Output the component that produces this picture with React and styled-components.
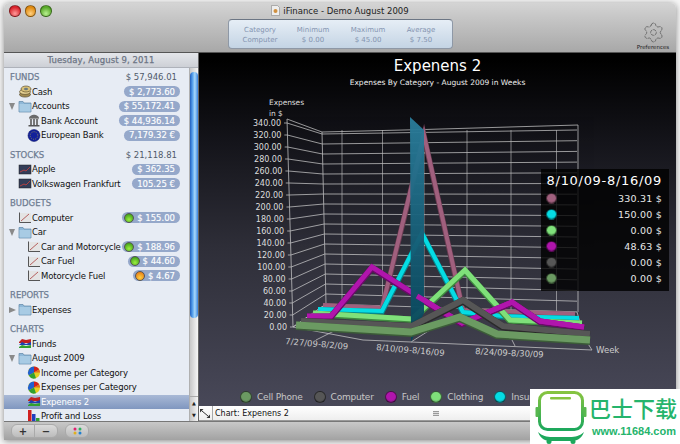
import React from 'react';
import styled, { createGlobalStyle } from 'styled-components';
import { Settings } from 'lucide-react';

const UI_FONT = '"DejaVu Sans", Verdana, sans-serif';

const GlobalStyle = createGlobalStyle`
  html, body {
    margin: 0;
    padding: 0;
    background: #f6f6f6;
    font-family: ${UI_FONT};
  }
`;

const Page = styled.div`
  position: relative;
  width: 680px;
  height: 444px;
  padding: 3px 4px 4px;
  box-sizing: border-box;
  overflow: hidden;
`;

const Window = styled.div`
  display: flex;
  flex-direction: column;
  height: 437px;
  border-radius: 5px 5px 0 0;
  overflow: hidden;
  box-shadow: 0 1px 6px rgba(0, 0, 0, 0.45);
`;

/* ---- toolbar ---- */
const TitleBar = styled.div`
  position: relative;
  height: 50px;
  flex: none;
  background: linear-gradient(#d4d4d4, #c6c6c6 30%, #a8a8a8);
  border-bottom: 1px solid #555;
  box-sizing: border-box;
`;

const Lights = styled.div`
  position: absolute;
  left: 5px;
  top: 2px;
  display: flex;
  gap: 4px;
`;

const Light = styled.span`
  width: 9.5px;
  height: 9.5px;
  border-radius: 50%;
  background: radial-gradient(circle at 50% 75%, ${(p) => p.$hi}, ${(p) => p.$lo} 70%);
  border: 0.5px solid rgba(0, 0, 0, 0.4);
`;

const WindowTitle = styled.div`
  display: flex;
  justify-content: center;
  align-items: center;
  gap: 3px;
  height: 15px;
  font-size: 8.5px;
  color: #222;
`;

const InfoPanel = styled.div`
  position: absolute;
  left: 224px;
  top: 16px;
  width: 225px;
  height: 30px;
  box-sizing: border-box;
  display: grid;
  grid-template-columns: 62px 44px 66px 40px;
  padding-top: 5px;
  border: 1px solid #8e98a6;
  border-top-color: #6c7684;
  border-radius: 4px;
  background: linear-gradient(#e6eef6, #c4d4e4);
`;

const InfoCell = styled.div`
  text-align: center;
  font-size: 7px;
  line-height: 10px;
  color: #8494b0;
  white-space: nowrap;
`;

const PrefButton = styled.div`
  position: absolute;
  right: 2px;
  top: 18px;
  width: 42px;
  display: flex;
  flex-direction: column;
  align-items: center;
  font-size: 5.5px;
  color: #222;
  line-height: 7px;
`;

/* ---- main ---- */
const Main = styled.div`
  display: flex;
  height: 368px;
  flex: none;
`;

const Sidebar = styled.div`
  width: 195px;
  flex: none;
  display: flex;
  flex-direction: column;
  background: #e7ecf4;
  border-right: 1px solid #666;
  box-sizing: border-box;
`;

const DateBar = styled.div`
  height: 15px;
  flex: none;
  text-align: center;
  font-size: 8.5px;
  line-height: 15px;
  color: #6c7484;
  -webkit-text-stroke: 0.25px #6c7484;
  letter-spacing: 0.1px;
  background: linear-gradient(#e4e6ea, #cdd0d6);
  border-bottom: 1px solid #aeb2ba;
  box-sizing: border-box;
`;

const SideBody = styled.div`
  flex: 1;
  display: flex;
  min-height: 0;
`;

const List = styled.div`
  flex: 1;
  min-width: 0;
  padding-top: 2px;
  overflow: hidden;
`;

const Section = styled.div`
  margin-bottom: 5px;
`;

const SectionHead = styled.div`
  display: flex;
  justify-content: space-between;
  align-items: center;
  height: 14.5px;
  padding: 0 12px 0 6px;
  font-size: 8.5px;
  color: #6e7c92;
  -webkit-text-stroke: 0.25px #6e7c92;
`;

const SectionTotal = styled.span`
  font-size: 8.5px;
  color: #505a6a;
  -webkit-text-stroke: 0;
`;

const Row = styled.div`
  display: flex;
  align-items: center;
  height: 14.5px;
  padding: 0 9px 0 ${(p) => (p.$level === 2 ? 23 : 14)}px;
  position: relative;
  font-size: 8.5px;
  color: ${(p) => (p.$selected ? '#fff' : '#111')};
  background: ${(p) => (p.$selected ? 'linear-gradient(#a9b9d6, #7f96bf)' : 'none')};
  white-space: nowrap;
`;

const RowLabel = styled.span`
  flex: 1;
  letter-spacing: -0.15px;
`;

const Disclosure = styled.span`
  position: absolute;
  left: 5px;
  top: 4px;
  width: 0;
  height: 0;
  ${(p) =>
    p.$open
      ? 'border-left: 3.5px solid transparent; border-right: 3.5px solid transparent; border-top: 7px solid #8a8a8a;'
      : 'border-top: 3.5px solid transparent; border-bottom: 3.5px solid transparent; border-left: 7px solid #8a8a8a;'}
`;

const Pill = styled.span`
  display: flex;
  align-items: center;
  gap: 3px;
  height: 11px;
  padding: 0 5px;
  border-radius: 6px;
  background: #95a8ca;
  color: #fff;
  font-size: 8.5px;
  -webkit-text-stroke: 0.15px #fff;
`;

const Led = styled.span`
  width: 8px;
  height: 8px;
  margin-left: -3px;
  border-radius: 50%;
  border: 0.5px solid #555;
  background: radial-gradient(circle at 50% 70%, ${(p) => p.$hi}, ${(p) => p.$lo});
`;

const ScrollBar = styled.div`
  width: 9px;
  flex: none;
  display: flex;
  flex-direction: column;
  background: linear-gradient(90deg, #c8c8c8, #f6f6f6);
  border-left: 1px solid #b0b0b0;
  box-sizing: border-box;
`;

const ScrollThumb = styled.div`
  height: 246px;
  margin: 4px 0 0 0;
  border-radius: 5px;
  background: linear-gradient(90deg, #1f5fc0, #5ea8f0 35%, #a8d8fa 60%, #3a84e0);
`;

const ScrollArrows = styled.div`
  margin-top: auto;
  height: 24px;
  display: flex;
  flex-direction: column;
  align-items: center;
  justify-content: space-around;
  font-size: 5px;
  line-height: 6px;
  color: #222;
  border-top: 1px solid #aaa;
`;

/* ---- chart ---- */
const RightColumn = styled.div`
  flex: 1;
  min-width: 0;
  display: flex;
  flex-direction: column;
`;

const ChartPane = styled.div`
  flex: 1;
  display: flex;
  flex-direction: column;
  min-height: 0;
  background: linear-gradient(#000 2%, #14141a 25%, #2e2e38 55%, #484858);
`;

const ChartHead = styled.div`
  height: 39px;
  flex: none;
  text-align: center;
  color: #fff;
`;

const ChartTitle = styled.div`
  padding-top: 3px;
  font-size: 15px;
  line-height: 21px;
`;

const ChartSub = styled.div`
  font-size: 7.5px;
  line-height: 12px;
  color: #eee;
`;

const Plot = styled.div`
  position: relative;
  height: 296px;
  flex: none;
`;

const PlotSvg = styled.svg`
  display: block;
  width: 100%;
  height: 100%;
`;

const Tip = styled.div`
  position: absolute;
  left: 342px;
  top: 77px;
  width: 128px;
  height: 122px;
  padding: 3px 7px 0 5px;
  box-sizing: border-box;
  background: rgba(0, 0, 0, 0.8);
  color: #e8e8e8;
`;

const TipTitle = styled.div`
  font-size: 13px;
  letter-spacing: 0.7px;
  line-height: 18px;
  color: #fff;
  text-align: right;
  white-space: nowrap;
`;

const TipRow = styled.div`
  display: flex;
  justify-content: space-between;
  align-items: center;
  height: 16px;
  font-size: 9.5px;
  letter-spacing: 0.2px;
`;

const Ball = styled.span`
  width: ${(p) => p.$size}px;
  height: ${(p) => p.$size}px;
  flex: none;
  border-radius: 50%;
  background: radial-gradient(circle at 50% 35%, ${(p) => p.$color} 55%, rgba(0, 0, 0, 0.55) 130%);
  border: 0.5px solid rgba(0, 0, 0, 0.5);
`;

const Legend = styled.div`
  flex: 1;
  display: flex;
  align-items: center;
  gap: 11px;
  padding-left: 41px;
  font-size: 9px;
  letter-spacing: -0.2px;
  color: #c6c6c6;
  white-space: nowrap;
`;

const LegendItem = styled.span`
  display: flex;
  align-items: center;
  gap: 5px;
`;

/* ---- bottom ---- */
const StatusBar = styled.div`
  height: 15px;
  flex: none;
  display: flex;
  align-items: center;
  position: relative;
  background: linear-gradient(#fff, #eee);
  border-bottom: 1px solid #999;
  box-sizing: border-box;
  font-size: 8px;
  color: #111;
`;

const Resize = styled.span`
  display: flex;
  width: 14px;
  height: 100%;
  align-items: center;
  padding-left: 1px;
  box-sizing: border-box;
  border-right: 1px solid #aaa;
  margin-right: 2px;
`;

const Grip = styled.span`
  position: absolute;
  left: 234px;
  top: 5px;
  width: 6px;
  height: 5px;
  background: repeating-linear-gradient(#999 0 1px, #ddd 1px 2px);
`;

const BottomBar = styled.div`
  flex: 1;
  display: flex;
  align-items: center;
  gap: 7px;
  padding-left: 7px;
  background: linear-gradient(#c8c8c8, #a2a2a2);
  border-top: 1px solid #777;
  box-sizing: border-box;
`;

const SegGroup = styled.div`
  display: flex;
  height: 12px;
  border-radius: 6px;
  overflow: hidden;
  border: 1px solid #aaa;
  background: linear-gradient(#dadada, #bcbcbc);
`;

const SegButton = styled.span`
  width: ${(p) => p.$w}px;
  display: flex;
  align-items: center;
  justify-content: center;
  font-size: 10px;
  font-weight: bold;
  color: #333;
  & + & {
    border-left: 1px solid #aaa;
  }
`;

/* ---- watermark ---- */
const Watermark = styled.div`
  position: absolute;
  left: 530px;
  top: 389px;
  width: 150px;
  height: 55px;
  display: flex;
  background: #fff;
`;

const WmText = styled.div`
  margin-left: 1px;
  display: flex;
  flex-direction: column;
  color: #25b46c;
  white-space: nowrap;
`;

const WmName = styled.div`
  font-family: "Noto Sans CJK SC", sans-serif;
  font-size: 22px;
  line-height: 32px;
  margin-top: 2px;
  font-weight: 500;
`;

const WmUrl = styled.div`
  font-family: "Liberation Sans", sans-serif;
  font-size: 11px;
  font-weight: bold;
  line-height: 13px;
  margin-left: 3px;
  margin-top: 2px;
`;

/* ---- icons ---- */
const Svg = ({ children, w = 14, h = 13 }) => (
  <svg width={w} height={h} viewBox="0 0 14 13" style={{ flex: 'none' }}>
    {children}
  </svg>
);

const FolderIcon = () => (
  <Svg>
    <path d="M1 3V1.5h4L6 3h7v9H1z" fill="#8fb8d8" stroke="#5f86a6" strokeWidth="0.7" />
    <rect x="1.5" y="4" width="11" height="7.5" fill="#a8cbe4" />
  </Svg>
);

const CoinsIcon = () => (
  <Svg>
    <ellipse cx="7" cy="9.5" rx="5.5" ry="2.6" fill="#a08a50" stroke="#4a3c20" strokeWidth="0.6" />
    <ellipse cx="7" cy="6.8" rx="5.5" ry="2.6" fill="#e4cf90" stroke="#4a3c20" strokeWidth="0.6" />
    <ellipse cx="8" cy="4" rx="5" ry="3" fill="#d8c078" stroke="#4a3c20" strokeWidth="0.6" />
    <ellipse cx="8" cy="4" rx="2" ry="1.2" fill="#6a7a80" />
  </Svg>
);

const BankIcon = () => (
  <Svg>
    <path d="M2 4.500C2 2 5 .8 7 .8s5 1.200 5 3.700z" fill="#6a6a6a" />
    <rect x="2" y="4" width="10" height="1.2" fill="#999" />
    <path d="M3 5h2v6H3zM6 5h2v6H6zM9 5h2v6H9z" fill="#777" />
    <rect x="1.5" y="11" width="11" height="1.5" fill="#555" />
  </Svg>
);

const EuroIcon = () => (
  <Svg>
    <circle cx="7" cy="6.5" r="6" fill="#12209a" stroke="#081060" strokeWidth="0.5" />
    <circle cx="7" cy="6.5" r="3.8" fill="none" stroke="#c8b830" strokeWidth="0.7" strokeDasharray="0.8 1.2" />
  </Svg>
);

const StockIcon = () => (
  <Svg>
    <rect x="1" y="2" width="12" height="9" fill="#333d58" stroke="#222" strokeWidth="0.5" />
    <path d="M2 9l4-2 2 1 4-4" fill="none" stroke="#c04040" strokeWidth="0.9" />
  </Svg>
);

const BudgetIcon = () => (
  <Svg>
    <rect x="1.500" y="2" width="11.500" height="9.500" fill="#e4e4e4" />
    <path d="M1.500 1.500V11.500H13" fill="none" stroke="#555" strokeWidth="1" />
    <path d="M3 10l8-7" stroke="#b05050" strokeWidth="0.9" />
  </Svg>
);

const AreaIcon = () => (
  <Svg>
    <path d="M1 5l3-3 4 1 5-1v4H1z" fill="#c02020" />
    <path d="M1 8l3-3 4 2 5-2v3H1z" fill="#2040b0" />
    <path d="M1 10l3-2 4 1 5-1v3H1z" fill="#30a030" />
  </Svg>
);

const PieIcon = () => (
  <Svg>
    <circle cx="7" cy="6.5" r="6" fill="#e4d020" />
    <path d="M7 6.5V.5A6 6 0 0 0 1.8 9.5z" fill="#2060d0" />
    <path d="M7 6.5V.5A6 6 0 0 1 12.2 3.5z" fill="#d02020" />
    <path d="M7 6.5L12.2 3.5A6 6 0 0 1 13 6.5z" fill="#e07020" />
    <path d="M7 6.5L1.8 9.5A6 6 0 0 0 9 12.2z" fill="#30a030" />
  </Svg>
);

const BarsIcon = () => (
  <Svg>
    <rect x="1" y="0" width="3.5" height="11" fill="#d02020" />
    <rect x="5" y="4" width="3.5" height="7" fill="#2040c0" />
    <rect x="9" y="8" width="3.5" height="4" fill="#30a030" />
  </Svg>
);

const ICONS = {
  folder: FolderIcon,
  coins: CoinsIcon,
  bank: BankIcon,
  euro: EuroIcon,
  stock: StockIcon,
  budget: BudgetIcon,
  area: AreaIcon,
  pie: PieIcon,
  bars: BarsIcon,
};

const DocIcon = () => (
  <svg width="9" height="11" viewBox="0 0 9 11">
    <path d="M.5.5h6l2 2v8H.5z" fill="#eee" stroke="#888" strokeWidth="0.6" />
    <circle cx="4.5" cy="6" r="2" fill="#d09040" />
  </svg>
);

const ResizeIcon = () => (
  <svg width="10" height="9" viewBox="0 0 10 9">
    <path d="M0 0h3.500L0 3.500zM10 9H6.500L10 5.500z" fill="#333" />
    <path d="M2 2l6 5" stroke="#333" />
  </svg>
);

/* ---- data ---- */
const SECTIONS = [
  {
    title: 'FUNDS',
    total: '$ 57,946.01',
    rows: [
      { icon: 'coins', label: 'Cash', pill: '$ 2,773.60' },
      { icon: 'folder', label: 'Accounts', pill: '$ 55,172.41', open: true },
      { icon: 'bank', label: 'Bank Account', pill: '$ 44,936.14', level: 2 },
      { icon: 'euro', label: 'European Bank', pill: '7,179.32 €', level: 2 },
    ],
  },
  {
    title: 'STOCKS',
    total: '$ 21,118.81',
    rows: [
      { icon: 'stock', label: 'Apple', pill: '$ 362.35' },
      { icon: 'stock', label: 'Volkswagen Frankfurt', pill: '105.25 €' },
    ],
  },
  {
    title: 'BUDGETS',
    rows: [
      { icon: 'budget', label: 'Computer', pill: '$ 155.00', led: 'green' },
      { icon: 'folder', label: 'Car', open: true },
      { icon: 'budget', label: 'Car and Motorcycle', pill: '$ 188.96', led: 'green', level: 2 },
      { icon: 'budget', label: 'Car Fuel', pill: '$ 44.60', led: 'green', level: 2 },
      { icon: 'budget', label: 'Motorcycle Fuel', pill: '$ 4.67', led: 'orange', level: 2 },
    ],
  },
  {
    title: 'REPORTS',
    rows: [{ icon: 'folder', label: 'Expenses', open: false }],
  },
  {
    title: 'CHARTS',
    rows: [
      { icon: 'area', label: 'Funds' },
      { icon: 'folder', label: 'August 2009', open: true },
      { icon: 'pie', label: 'Income per Category', level: 2 },
      { icon: 'pie', label: 'Expenses per Category', level: 2 },
      { icon: 'area', label: 'Expenens 2', level: 2, selected: true },
      { icon: 'bars', label: 'Profit and Loss', level: 2 },
    ],
  },
];

const INFO = [
  ['Category', 'Computer'],
  ['Minimum', '$ 0.00'],
  ['Maximum', '$ 45.00'],
  ['Average', '$ 7.50'],
];

const COLORS = {
  phone: '#6b9a62',
  computer: '#565656',
  fuel: '#b015ac',
  clothing: '#7fe07a',
  insurance: '#05dce4',
  mauve: '#a0607e',
};

// depth order, back to front; screen coordinates
const SERIES_BACK = [
  { color: COLORS.mauve, edge: '#6a3c52', width: 4, pts: '323,305 382,308 424,135 463,310 575,314' },
  { color: COLORS.insurance, edge: '#048a90', width: 4, pts: '318,309 382,311 422,233 463,312 503,316 579,318' },
];
const SERIES_FRONT = [
  { color: COLORS.clothing, edge: '#3f8a3f', width: 5, pts: '313,313 412,319 465,270 510,320 582,323' },
  { color: COLORS.fuel, edge: '#6a0a68', width: 5, pts: '307,316 331,316 372,267 413,293 440,310 462,323 512,302 540,321 584,327' },
  { color: COLORS.computer, edge: '#2a2a2a', width: 6, pts: '301,321 412,326 463,300 503,326 590,334' },
  { color: COLORS.phone, edge: '#3c5c38', width: 7, pts: '296,325 411,332 460,317 497,334 590,340' },
];

const WALL_X = [342, 382.500, 424, 467, 511, 556.500];
const Y_VALUES = Array.from({ length: 18 }, (_, i) => 340 - i * 20);

const TIP_ROWS = [
  [COLORS.mauve, '330.31 $'],
  [COLORS.insurance, '150.00 $'],
  [COLORS.clothing, '0.00 $'],
  [COLORS.fuel, '48.63 $'],
  [COLORS.computer, '0.00 $'],
  [COLORS.phone, '0.00 $'],
];

const LEGEND = [
  [COLORS.phone, 'Cell Phone'],
  [COLORS.computer, 'Computer'],
  [COLORS.fuel, 'Fuel'],
  [COLORS.clothing, 'Clothing'],
  [COLORS.insurance, 'Insurance'],
];

const Ribbon = ({ s }) => (
  <g fill="none" strokeLinejoin="miter" strokeMiterlimit="6">
    <polyline points={s.pts} stroke={s.edge} strokeWidth={s.width + 1.500} transform="translate(0 0.800)" />
    <polyline points={s.pts} stroke={s.color} strokeWidth={s.width} />
  </g>
);

const Chart3D = () => (
  <PlotSvg viewBox="199 92 477 296">
    <defs>
      <linearGradient id="planeFill" x1="0" y1="0" x2="0" y2="1">
        <stop offset="0" stopColor="#2a7c9a" />
        <stop offset="1" stopColor="#064458" />
      </linearGradient>
    </defs>
    <text fill="#ddd" fontSize="7.500" fontFamily={UI_FONT} letterSpacing="-0.1">
      <tspan x="269" y="105">Expenses</tspan>
      <tspan x="269" y="116">in $</tspan>
    </text>
    <g stroke="#d8d8d8" strokeWidth="0.800" fill="none" opacity="0.85">
      <path d="M287 119L293 327M322 132L326 304M322 132L424 129.500L578 125M578 125V312M287 119L322 132" />
      {WALL_X.map((x) => (
        <path key={x} d={`M${x} 130V312`} opacity="0.8" />
      ))}
      {Y_VALUES.map((v, i) => {
        const fx = 287 + (6 * (340 - v)) / 340;
        const fy = 123 + i * 12;
        const by = 134 + i * 10;
        const bx = 322 + (4 * i) / 17;
        return (
          <path key={v} d={`M${fx - 3} ${fy}H${fx}L${bx} ${by}L577 ${130 + i * 10.700}`} />
        );
      })}
      <path d="M293 327L363 340L411 342L592 350L585 339L577 312M326 304L293 327M340 328L316 340M430 330L411 342M510 336L515 346" />
    </g>
    {Y_VALUES.map((v, i) => (
      <text
        key={v}
        x={281 + (6 * (340 - v)) / 340}
        y={126 + i * 12}
        textAnchor="end"
        fill="#ddd"
        fontSize="8"
        fontFamily={UI_FONT}
      >
        {v.toFixed(2)}
      </text>
    ))}
    {SERIES_BACK.map((s) => (
      <Ribbon key={s.pts} s={s} />
    ))}
    <Ribbon s={SERIES_FRONT[0]} />
    <Ribbon s={SERIES_FRONT[1]} />
    <polygon points="410,117 424,130 424,313 411,342" fill="url(#planeFill)" opacity="0.96" />
    <polyline
      points="417,296 440,310 462,323 512,302 540,321 584,327"
      fill="none"
      stroke={COLORS.fuel}
      strokeWidth="5"
    />
    <Ribbon s={SERIES_FRONT[2]} />
    <Ribbon s={SERIES_FRONT[3]} />
    <g fill="#ccc" fontSize="8.500" fontFamily={UI_FONT}>
      <text transform="translate(285 344) rotate(5)">7/27/09-8/2/09</text>
      <text transform="translate(376 350) rotate(5)">8/10/09-8/16/09</text>
      <text transform="translate(475 354) rotate(3)">8/24/09-8/30/09</text>
      <text x="596" y="353">Week</text>
    </g>
  </PlotSvg>
);

const WatermarkLogo = () => (
  <svg width="58" height="55" viewBox="0 0 58 55" style={{ flex: 'none' }}>
    <defs>
      <linearGradient id="wmGreen" x1="0" y1="0" x2="0" y2="1">
        <stop offset="0" stopColor="#86c440" />
        <stop offset="1" stopColor="#1da85c" />
      </linearGradient>
    </defs>
    <rect x="9.500" y="3.500" width="43" height="37" rx="8" fill="none" stroke="url(#wmGreen)" strokeWidth="3" />
    <rect x="20" y="8" width="21" height="2.500" rx="1" fill="#86c440" />
    <rect x="5.500" y="18" width="3" height="10" rx="1" fill="#58b850" />
    <rect x="53.500" y="18" width="3" height="10" rx="1" fill="#58b850" />
    <path d="M8 43c3 8 8 9 14 9h18c6 0 11-1 14-9-4 4-9 5-14 5H22c-5 0-10-1-14-5z" fill="#1da85c" />
    <circle cx="19" cy="52.500" r="2.500" fill="#1da85c" />
    <circle cx="43" cy="52.500" r="2.500" fill="#1da85c" />
  </svg>
);

const TreeRow = ({ row }) => {
  const Icon = ICONS[row.icon];
  return (
    <Row $level={row.level} $selected={row.selected}>
      {row.open !== undefined && <Disclosure $open={row.open} />}
      <Icon />
      <RowLabel>{row.label}</RowLabel>
      {row.pill && (
        <Pill>
          {row.led && (
            <Led
              $hi={row.led === 'green' ? '#9cf040' : '#ffd040'}
              $lo={row.led === 'green' ? '#2a8a10' : '#e06a10'}
            />
          )}
          {row.pill}
        </Pill>
      )}
    </Row>
  );
};

export default function App() {
  return (
    <>
      <GlobalStyle />
      <Page>
        <Window>
          <TitleBar>
            <Lights>
              <Light $hi="#ff9a9a" $lo="#d8222a" />
              <Light $hi="#ffd080" $lo="#e08a10" />
              <Light $hi="#b8f090" $lo="#58a828" />
            </Lights>
            <WindowTitle>
              <DocIcon />
              iFinance - Demo August 2009
            </WindowTitle>
            <InfoPanel>
              {INFO.map(([k, v]) => (
                <InfoCell key={k}>
                  {k}
                  <br />
                  {v}
                </InfoCell>
              ))}
            </InfoPanel>
            <PrefButton>
              <Settings size={23} strokeWidth={1} color="#6e6e6e" strokeDasharray="3 1.5" />
              Preferences
            </PrefButton>
          </TitleBar>
          <Main>
            <Sidebar>
              <DateBar>Tuesday, August 9, 2011</DateBar>
              <SideBody>
                <List>
                  {SECTIONS.map((sec) => (
                    <Section key={sec.title}>
                      <SectionHead>
                        {sec.title}
                        {sec.total && <SectionTotal>{sec.total}</SectionTotal>}
                      </SectionHead>
                      {sec.rows.map((row) => (
                        <TreeRow key={row.label} row={row} />
                      ))}
                    </Section>
                  ))}
                </List>
                <ScrollBar>
                  <ScrollThumb />
                  <ScrollArrows>
                    <span>▲</span>
                    <span>▼</span>
                  </ScrollArrows>
                </ScrollBar>
              </SideBody>
            </Sidebar>
            <RightColumn>
              <ChartPane>
                <ChartHead>
                  <ChartTitle>Expenens 2</ChartTitle>
                  <ChartSub>Expenses By Category - August 2009 in Weeks</ChartSub>
                </ChartHead>
                <Plot>
                  <Chart3D />
                  <Tip>
                    <TipTitle>8/10/09-8/16/09</TipTitle>
                    {TIP_ROWS.map(([color, value], i) => (
                      <TipRow key={i}>
                        <Ball $color={color} $size={9} />
                        {value}
                      </TipRow>
                    ))}
                  </Tip>
                </Plot>
                <Legend>
                  {LEGEND.map(([color, name]) => (
                    <LegendItem key={name}>
                      <Ball $color={color} $size={10} />
                      {name}
                    </LegendItem>
                  ))}
                </Legend>
              </ChartPane>
              <StatusBar>
                <Resize>
                  <ResizeIcon />
                </Resize>
                Chart: Expenens 2
                <Grip />
              </StatusBar>
            </RightColumn>
          </Main>
          <BottomBar>
            <SegGroup>
              <SegButton $w={22}>+</SegButton>
              <SegButton $w={22}>−</SegButton>
            </SegGroup>
            <SegGroup>
              <SegButton $w={22}>
                <svg width="9" height="8" viewBox="0 0 9 8">
                  <circle cx="2" cy="2" r="1.500" fill="#e02070" />
                  <circle cx="7" cy="2" r="1.500" fill="#30b060" />
                  <circle cx="2" cy="6" r="1.500" fill="#e0b020" />
                  <circle cx="7" cy="6" r="1.500" fill="#2080d0" />
                </svg>
              </SegButton>
            </SegGroup>
          </BottomBar>
        </Window>
        <Watermark>
          <WatermarkLogo />
          <WmText>
            <WmName>巴士下载</WmName>
            <WmUrl>www.11684.com</WmUrl>
          </WmText>
        </Watermark>
      </Page>
    </>
  );
}
